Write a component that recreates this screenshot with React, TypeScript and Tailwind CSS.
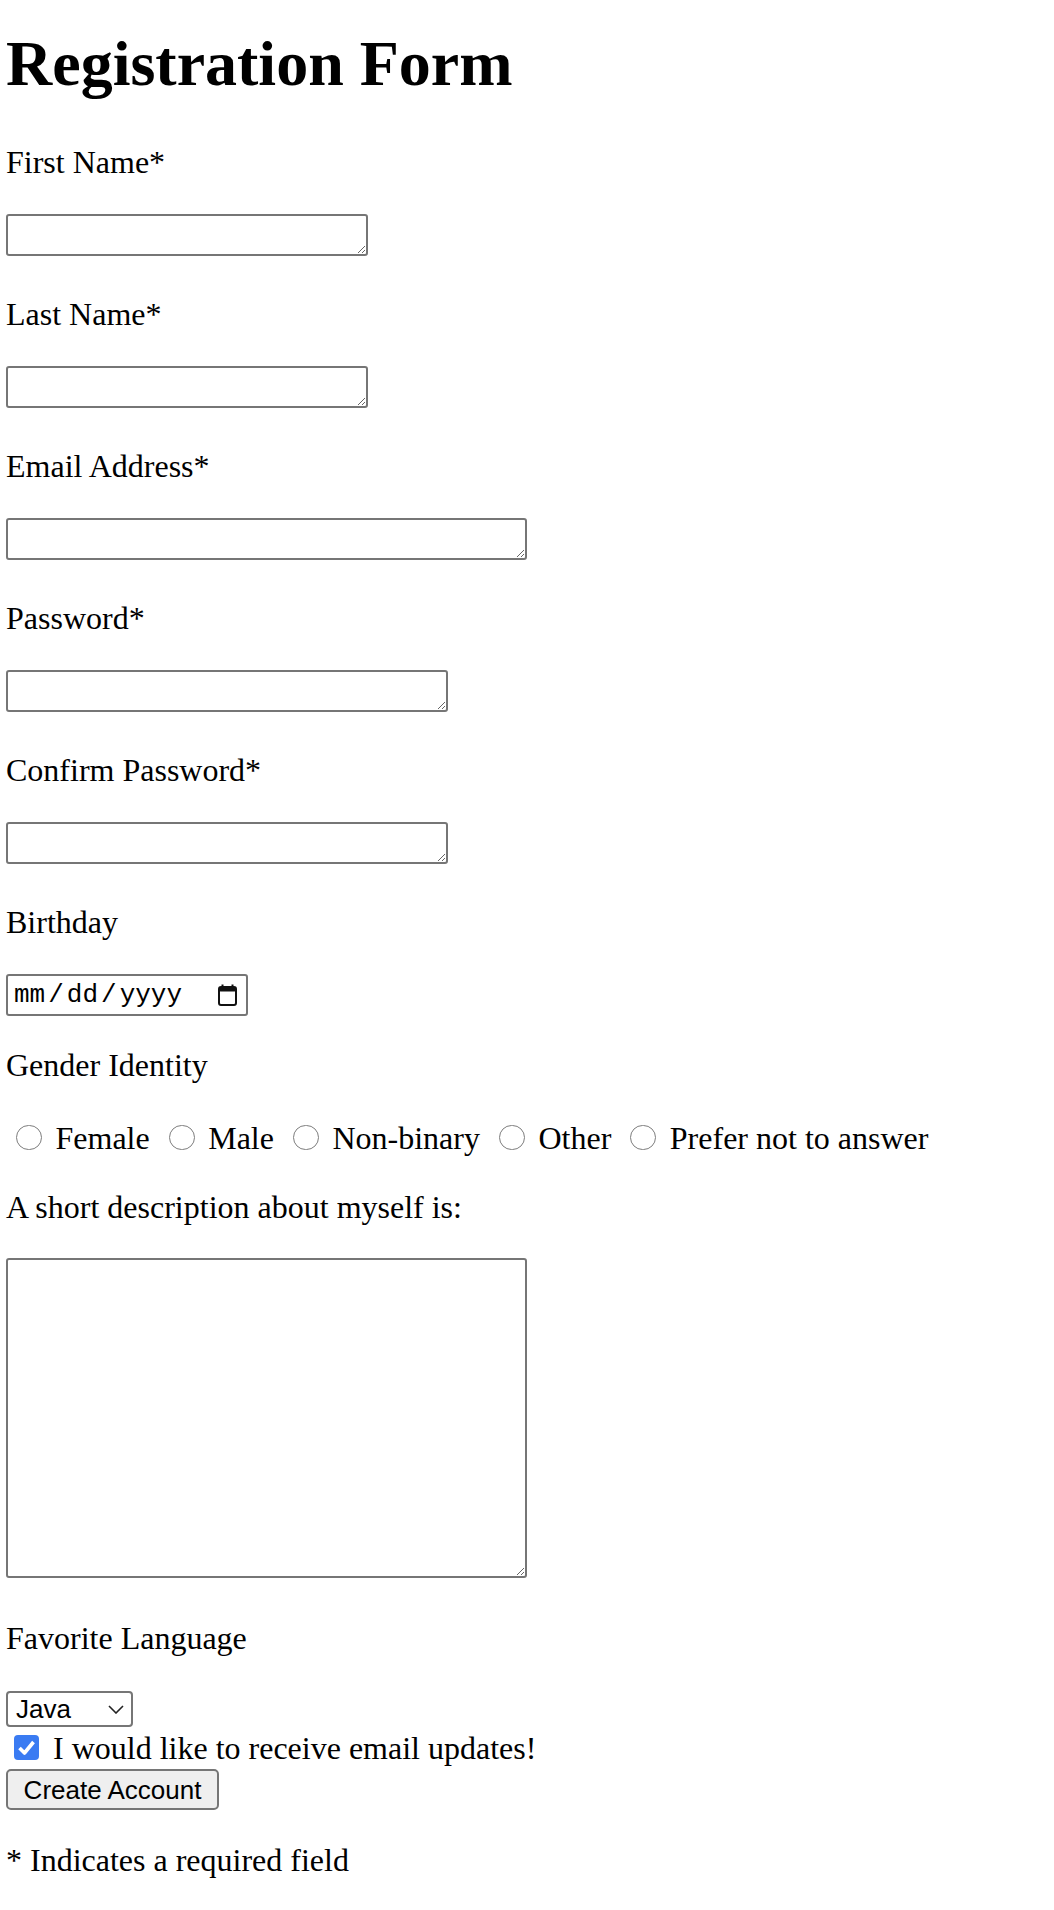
import React from "react";

const Field = ({ label, width, first }: { label: string; width: string; first?: boolean }) => (
  <div>
    <p className={first ? "mt-[43px]" : "mt-[40px]"}>{label}</p>
    <textarea
      className={`mt-[33px] block h-[42px] ${width} rounded-[3px] border-2 border-[#767676] bg-white`}
    />
  </div>
);

const Radio = ({ label, first }: { label: string; first?: boolean }) => (
  <div className="flex items-start">
    <span
      className={`mt-[5px] h-[25px] w-[26px] shrink-0 rounded-full border-[1.5px] border-[#7d7d7d] bg-white ${
        first ? "ml-[10px]" : "ml-[19px]"
      }`}
    />
    <span className="ml-[13.5px] whitespace-nowrap">{label}</span>
  </div>
);

const CalendarIcon = () => (
  <svg width="19" height="22" viewBox="0 0 19 22" fill="none">
    <path d="M4.5 0.5v3M14.5 0.5v3" stroke="#111" strokeWidth="2" />
    <rect x="1" y="3" width="17" height="18" rx="2" stroke="#111" strokeWidth="2" />
    <rect x="1" y="3" width="17" height="4.5" rx="1.5" fill="#111" />
  </svg>
);

export default function App() {
  return (
    <div className="min-h-screen bg-white pl-[6px] font-['Liberation_Serif',serif] text-[32px] leading-[37px] text-black">
      <h1 className="pt-[27px] text-[64px] font-bold leading-[74px]">Registration Form</h1>

      <Field label="First Name*" width="w-[362px]" first />
      <Field label="Last Name*" width="w-[362px]" />
      <Field label="Email Address*" width="w-[521px]" />
      <Field label="Password*" width="w-[442px]" />
      <Field label="Confirm Password*" width="w-[442px]" />

      <p className="mt-[40px]">Birthday</p>
      <div className="mt-[33px] flex h-[42px] w-[242px] items-center justify-between rounded-[3px] border-2 border-[#767676] pl-[6px] pr-[9px] font-['Liberation_Mono',monospace] text-[26px] leading-[30px]">
        <div className="flex">
          <span>mm</span>
          <span className="mx-[3px]">/</span>
          <span>dd</span>
          <span className="mx-[3px]">/</span>
          <span>yyyy</span>
        </div>
        <CalendarIcon />
      </div>

      <p className="mt-[31px]">Gender Identity</p>
      <div className="mt-[36px] flex">
        <Radio label="Female" first />
        <Radio label="Male" />
        <Radio label="Non-binary" />
        <Radio label="Other" />
        <Radio label="Prefer not to answer" />
      </div>

      <p className="mt-[32px]">A short description about myself is:</p>
      <textarea className="mt-[32px] block h-[320px] w-[521px] rounded-[3px] border-2 border-[#767676] bg-white" />

      <p className="mt-[42px]">Favorite Language</p>
      <div className="mt-[34px] flex h-[36px] w-[127px] items-center justify-between rounded-[4px] border-2 border-[#767676] pl-[8px] pr-[7px] font-['Liberation_Sans',sans-serif] text-[26px] leading-[30px]">
        <span>Java</span>
        <svg width="16" height="9" viewBox="0 0 16 9" fill="none">
          <path d="M1 1l7 7 7-7" stroke="#222" strokeWidth="1.6" />
        </svg>
      </div>

      <div className="mt-[3px] flex items-start">
        <span className="ml-[8px] mt-[4.5px] flex h-[25.5px] w-[25px] shrink-0 items-center justify-center rounded-[4px] bg-[#3a7bf2]">
          <svg width="25" height="25" viewBox="0 0 25 25" fill="none">
            <path d="M5.5 13l5 5 9-11" stroke="#fff" strokeWidth="3.6" strokeLinejoin="round" />
          </svg>
        </span>
        <span className="ml-[14px]">I would like to receive email updates!</span>
      </div>

      <button className="mt-[2px] flex h-[41px] w-[213px] items-center justify-center rounded-[5px] border-2 border-[#767676] bg-[#efefef] font-['Liberation_Sans',sans-serif] text-[26px] leading-[30px] text-black">
        Create Account
      </button>

      <p className="mt-[32px]">* Indicates a required field</p>
    </div>
  );
}
